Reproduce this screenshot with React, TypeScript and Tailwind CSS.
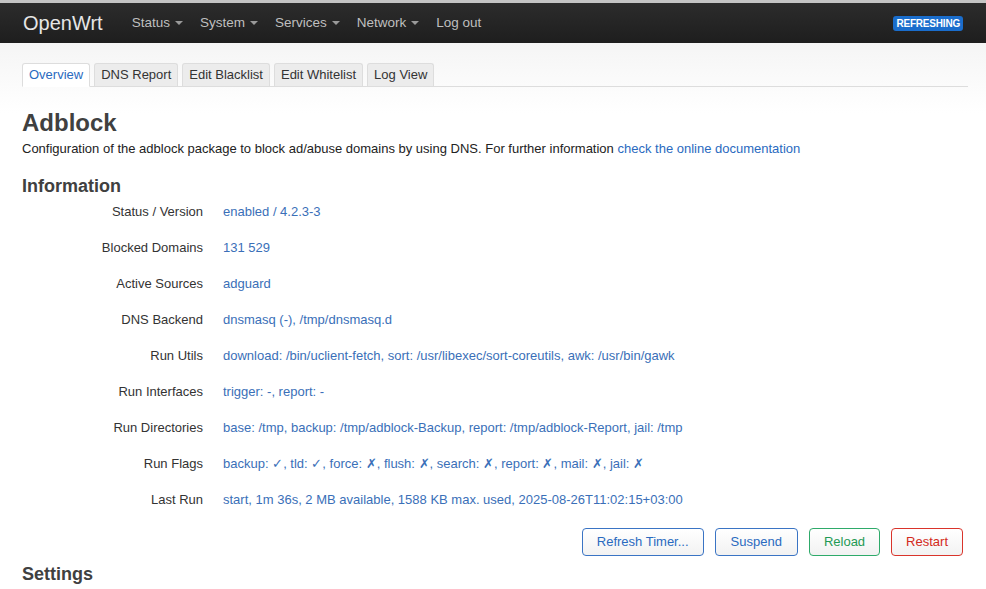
import React from "react";

const rows: [string, React.ReactNode][] = [
  ["Status / Version", "enabled / 4.2.3-3"],
  ["Blocked Domains", "131 529"],
  ["Active Sources", "adguard"],
  ["DNS Backend", "dnsmasq (-), /tmp/dnsmasq.d"],
  ["Run Utils", "download: /bin/uclient-fetch, sort: /usr/libexec/sort-coreutils, awk: /usr/bin/gawk"],
  ["Run Interfaces", "trigger: -, report: -"],
  ["Run Directories", "base: /tmp, backup: /tmp/adblock-Backup, report: /tmp/adblock-Report, jail: /tmp"],
  ["Run Flags", "backup: ✓, tld: ✓, force: ✗, flush: ✗, search: ✗, report: ✗, mail: ✗, jail: ✗"],
  ["Last Run", "start, 1m 36s, 2 MB available, 1588 KB max. used, 2025-08-26T11:02:15+03:00"],
];

const menu = ["Status", "System", "Services", "Network"];
const tabs = ["Overview", "DNS Report", "Edit Blacklist", "Edit Whitelist", "Log View"];

function Caret() {
  return <span className="ml-[5px] inline-block h-0 w-0 border-x-[4px] border-t-[4px] border-x-transparent border-t-[#999] align-middle" />;
}

export default function App() {
  return (
    <div className="min-h-[589px] bg-white font-['Liberation_Sans',Arial,sans-serif] text-[#404040]">
      <div className="h-[3px] bg-[#c4c4c4]" />
      {/* top navbar */}
      <div className="flex h-[40px] items-center bg-gradient-to-b from-[#2c2c2c] to-[#1e1e1e] pl-[23px] pr-[23px]">
        <span className="text-[20px] text-[#e6e6e6]">OpenWrt</span>
        <div className="ml-[29px] flex items-center gap-[17px] text-[13.5px] text-[#bfbfbf]">
          {menu.map((m) => (
            <span key={m} className="flex items-center">
              {m}
              <Caret />
            </span>
          ))}
          <span>Log out</span>
        </div>
        <span className="ml-auto rounded-[3px] bg-[#1a6dcc] px-[3px] py-[2px] text-[10px] font-bold leading-[11px] tracking-[-0.2px] text-white">
          REFRESHING
        </span>
      </div>

      <div className="bg-gradient-to-b from-[#f5f5f5] to-white to-[70px] px-[22px] pt-[20px]">
        {/* tabs */}
        <div className="mr-[-4px] flex gap-[4px] border-b border-[#ddd]">
          {tabs.map((t, i) => (
            <div
              key={t}
              className={
                i === 0
                  ? "-mb-px flex h-[24px] items-center rounded-t-[3px] border border-b-white border-[#ddd] bg-white px-[6px] text-[13px] text-[#2a6ac0]"
                  : "flex h-[23px] items-center rounded-t-[3px] border border-b-0 border-[#ddd] bg-[#ececec] px-[6px] text-[13px] text-[#333]"
              }
            >
              {t}
            </div>
          ))}
        </div>

        <h2 className="mt-[22px] text-[24px] font-bold leading-[28px] text-[#404040]">Adblock</h2>
        <p className="mt-[4px] text-[13px] leading-[16px] text-[#222]">
          Configuration of the adblock package to block ad/abuse domains by using DNS. For further information{" "}
          <span className="text-[#2a6ac0]">check the online documentation</span>
        </p>

        <h3 className="mt-[18px] text-[18px] font-bold leading-[22px] text-[#404040]">Information</h3>

        <div className="mt-[-3px] flex flex-col">
          {rows.map(([label, value]) => (
            <div key={label} className="flex h-[36px] items-center text-[13px]">
              <div className="w-[181px] text-right text-[#333]">{label}</div>
              <div className="ml-[20px] text-[#3a6fb8]">{value}</div>
            </div>
          ))}
        </div>

        <div className="mt-[10px] flex justify-end gap-[11px] pr-[1px] text-[13px]">
          <button className="h-[28px] rounded-[4px] border border-[#3a74c4] bg-gradient-to-b from-white to-[#f2f2f2] px-[14px] text-[#2a6ac0]">
            Refresh Timer...
          </button>
          <button className="h-[28px] rounded-[4px] border border-[#3a74c4] bg-gradient-to-b from-white to-[#f2f2f2] px-[15px] text-[#2a6ac0]">
            Suspend
          </button>
          <button className="h-[28px] rounded-[4px] border border-[#2eaa6a] bg-gradient-to-b from-white to-[#f2f2f2] px-[14px] text-[#1f9a55]">
            Reload
          </button>
          <button className="h-[28px] rounded-[4px] border border-[#d9342b] bg-gradient-to-b from-white to-[#f2f2f2] px-[14px] text-[#d32a20]">
            Restart
          </button>
        </div>

        <h3 className="mt-[7px] text-[18px] font-bold leading-[22px] text-[#404040]">Settings</h3>
      </div>
    </div>
  );
}
